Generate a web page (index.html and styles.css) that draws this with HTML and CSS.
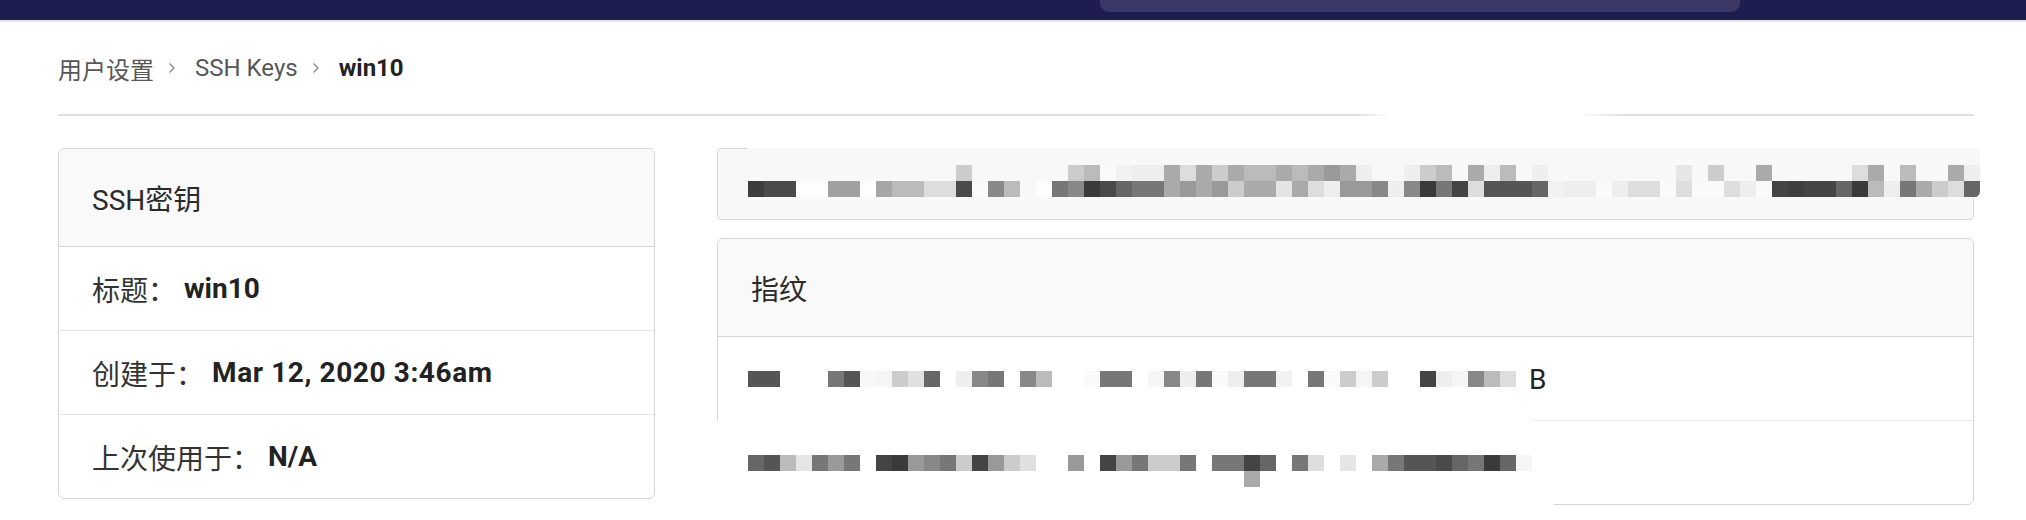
FILE: index.html
```html
<!DOCTYPE html>
<html lang="zh-CN">
<head>
<meta charset="utf-8">
<title>SSH Keys - win10</title>
<link rel="stylesheet" href="styles.css">
</head>
<body>
<header class="topbar"><div class="search"></div></header>
<main class="page">
  <nav class="breadcrumb">
    <a class="crumb">用户设置</a>
    <svg class="chev" viewBox="0 0 8 12" width="8" height="12"><path d="M1.5 1.5 L6 6 L1.5 10.5" fill="none" stroke="#8a8a8a" stroke-width="1.4"/></svg>
    <a class="crumb">SSH Keys</a>
    <svg class="chev" viewBox="0 0 8 12" width="8" height="12"><path d="M1.5 1.5 L6 6 L1.5 10.5" fill="none" stroke="#8a8a8a" stroke-width="1.4"/></svg>
    <span class="crumb current">win10</span>
  </nav>
  <div class="content">
    <section class="card">
      <div class="card-header">SSH密钥</div>
      <div class="row"><span class="label">标题：</span><strong class="value">win10</strong></div>
      <div class="row"><span class="label">创建于：</span><strong class="value date">Mar 12, 2020 3:46am</strong></div>
      <div class="row row-last"><span class="label">上次使用于：</span><strong class="value">N/A</strong></div>
    </section>
    <div class="side">
      <section class="keycard"><div class="key-mosaic"></div></section>
      <section class="card fp">
        <div class="patch"></div>
        <div class="card-header">指纹</div>
        <div class="row fp-row fp-first"><span class="mosaic fp1"></span><span class="tail">B</span></div>
        <div class="row fp-row row-last"><span class="mosaic fp2"></span></div>
      </section>
    </div>
  </div>
</main>
</body>
</html>
```
FILE: styles.css
```css
* { box-sizing: border-box; }
html, body { margin: 0; padding: 0; background: #fff; }
body {
  font-family: Roboto, "Noto Sans CJK SC", sans-serif;
  color: #333;
}
.topbar {
  height: 22px;
  background: #1e1d4f;
  border-bottom: 2px solid #e3e3e9;
}
.search {
  margin-left: 1100px;
  width: 640px;
  height: 12px;
  background: #3b3868;
  border-radius: 0 0 9px 9px;
}
.page {
  padding: 0 52px 0 58px;
}
.breadcrumb {
  height: 94px;
  padding-bottom: 2px;
  display: flex;
  align-items: center;
  font-size: 24px;
  background: linear-gradient(90deg, #e0e0e0 0 1299px, rgba(224,224,224,0) 1332px 1522px, #e0e0e0 1564px) left bottom / 100% 2px no-repeat;
}
.crumb { color: #575757; text-decoration: none; }
.crumb.current { color: #222; font-weight: 700; }
.chev { margin: 0 14px 0 14px; flex: none; }
.chev + .crumb { margin-left: 5px; }
.content {
  margin-top: 32px;
  display: grid;
  grid-template-columns: 597px 1fr;
  column-gap: 62px;
  align-items: start;
}
.card {
  border: 1px solid #d6d6d6;
  border-radius: 6px;
  background: #fff;
}
.card-header {
  height: 98px;
  border-bottom: 1px solid #d6d6d6;
  background: #f9f9f9;
  border-radius: 6px 6px 0 0;
  display: flex;
  align-items: center;
  padding-left: 33px;
  font-size: 28px;
  color: #2b2b2b;
}
.row {
  height: 84px;
  border-bottom: 1px solid #e6e6e6;
  display: flex;
  align-items: center;
  padding-left: 33px;
  font-size: 28px;
}
.row.row-last { border-bottom: none; height: 83px; }
.label { color: #333; }
.value { color: #222; font-weight: 700; margin-left: 8px; }
.value.date { letter-spacing: 0.6px; }
.side { display: flex; flex-direction: column; gap: 18px; }
.keycard {
  position: relative;
  height: 72px;
  background: #f8f8f8;
  border: 1px solid #d8d8d8;
  border-radius: 4px;
}
.key-mosaic {
  position: absolute;
  left: 30px;
  top: -1px;
  width: 1232px;
  height: 50px;
  border-radius: 0 0 7px 0;
  background:
    linear-gradient(90deg, transparent 0 208px, #ccc 208px 224px, transparent 224px 320px, #ccc 320px 336px, #bbb 336px 352px, #fafafa 352px 368px, #f2f2f2 368px 384px, #eee 384px 416px, #aaa 416px 432px, #ddd 432px 448px, #aaa 448px 464px, #ccc 464px 480px, #aaa 480px 496px, #bbb 496px 528px, #aaa 528px 544px, #bbb 544px 560px, #aaa 560px 576px, #999 576px 592px, #aaa 592px 608px, #eee 608px 624px, transparent 624px 656px, #eee 656px 672px, #ccc 672px 688px, #bbb 688px 704px, transparent 704px 720px, #aaa 720px 736px, #eee 736px 752px, #bbb 752px 768px, transparent 768px 784px, #eee 784px 800px, transparent 800px 928px, #e6e6e6 928px 944px, transparent 944px 960px, #ccc 960px 976px, transparent 976px 1008px, #aaa 1008px 1024px, transparent 1024px 1104px, #ddd 1104px 1120px, #aaa 1120px 1136px, transparent 1136px 1152px, #bbb 1152px 1168px, transparent 1168px 1200px, #aaa 1200px 1216px, #eee 1216px 1232px) 0 17px / 1232px 16px no-repeat,
    linear-gradient(90deg, #3d3d3d 0 16px, #4a4a4a 16px 48px, #fdfdfd 48px 80px, #a0a0a0 80px 112px, #fdfdfd 112px 128px, #a6a6a6 128px 144px, #bbb 144px 176px, #ddd 176px 208px, #4a4a4a 208px 224px, #fafafa 224px 240px, #888 240px 256px, #bbb 256px 272px, #f8f8f8 272px 288px, #fdfdfd 288px 304px, #777 304px 320px, #888 320px 336px, #3a3a3a 336px 352px, #4a4a4a 352px 368px, #666 368px 384px, #777 384px 416px, #aaa 416px 432px, #999 432px 448px, #aaa 448px 464px, #999 464px 480px, #ccc 480px 496px, #aaa 496px 528px, #e4e4e4 528px 544px, #aaa 544px 560px, #ddd 560px 576px, #eee 576px 592px, #999 592px 624px, #888 624px 640px, #eee 640px 656px, #888 656px 672px, #3a3a3a 672px 688px, #777 688px 704px, #444 704px 720px, #ddd 720px 736px, #555 736px 784px, #666 784px 800px, #f2f2f2 800px 816px, #eee 816px 848px, #fafafa 848px 864px, #eee 864px 880px, #ddd 880px 912px, #fafafa 912px 928px, #ddd 928px 944px, #fafafa 944px 976px, #ddd 976px 992px, #eee 992px 1008px, #fafafa 1008px 1024px, #444 1024px 1040px, #3f3f3f 1040px 1056px, #444 1056px 1088px, #666 1088px 1104px, #3a3a3a 1104px 1120px, #bbb 1120px 1136px, #eee 1136px 1152px, #777 1152px 1168px, #aaa 1168px 1184px, #ccc 1184px 1200px, #ddd 1200px 1216px, #666 1216px 1232px) 0 33px / 1232px 16px no-repeat,
    #f8f8f8;
}
.fp { position: relative; }
.fp-row { position: relative; z-index: 1; padding-left: 30px; }
.fp-row.fp-first {
  border-bottom: none;
  background: linear-gradient(90deg, transparent 0 815px, #e6e6e6 815px) left bottom / 100% 1px no-repeat;
}
.mosaic { display: block; height: 16px; flex: none; }
.fp1 {
  width: 768px;
  background: linear-gradient(90deg, #555 0 32px, #fff 32px 80px, #777 80px 96px, #555 96px 112px, #f8f8f8 112px 128px, #f5f5f5 128px 144px, #ccc 144px 160px, #e0e0e0 160px 176px, #666 176px 192px, #fff 192px 208px, #eee 208px 224px, #888 224px 240px, #777 240px 256px, #fff 256px 272px, #888 272px 288px, #bbb 288px 304px, #fff 304px 336px, #fafafa 336px 352px, #777 352px 384px, #fff 384px 400px, #f5f5f5 400px 416px, #888 416px 432px, #eee 432px 448px, #777 448px 464px, #fafafa 464px 480px, #eee 480px 496px, #777 496px 528px, #f2f2f2 528px 544px, #fff 544px 560px, #777 560px 576px, #fafafa 576px 592px, #ccc 592px 608px, #f5f5f5 608px 624px, #ccc 624px 640px, #fff 640px 672px, #444 672px 688px, #eee 688px 704px, #f5f5f5 704px 720px, #888 720px 736px, #bbb 736px 752px, #ddd 752px 768px);
}
.tail { margin-left: 13px; color: #222; font-size: 28px; }
.fp2 {
  width: 784px;
  height: 32px;
  margin-top: 16px;
  background:
    linear-gradient(90deg, #666 0 16px, #555 16px 32px, #bbb 32px 48px, #e6e6e6 48px 64px, #777 64px 80px, #999 80px 96px, #777 96px 112px, #fff 112px 128px, #444 128px 144px, #3a3a3a 144px 160px, #999 160px 176px, #888 176px 192px, #777 192px 208px, #ccc 208px 224px, #444 224px 240px, #999 240px 256px, #ccc 256px 272px, #e0e0e0 272px 288px, #fff 288px 320px, #999 320px 336px, #fff 336px 352px, #444 352px 368px, #999 368px 384px, #777 384px 400px, #ccc 400px 432px, #777 432px 448px, #fff 448px 464px, #777 464px 496px, #444 496px 512px, #666 512px 528px, #fff 528px 544px, #777 544px 560px, #ddd 560px 576px, #fff 576px 592px, #e6e6e6 592px 608px, #fff 608px 624px, #aaa 624px 640px, #777 640px 656px, #555 656px 688px, #4a4a4a 688px 704px, #666 704px 720px, #777 720px 736px, #3a3a3a 736px 752px, #666 752px 768px, #f5f5f5 768px 784px) 0 0 / 784px 16px no-repeat,
    linear-gradient(#aaa, #aaa) 496px 16px / 16px 16px no-repeat;
}
.patch {
  position: absolute;
  left: -1px;
  top: 182px;
  bottom: -1px;
  width: 837px;
  background: #fff;
}
```
